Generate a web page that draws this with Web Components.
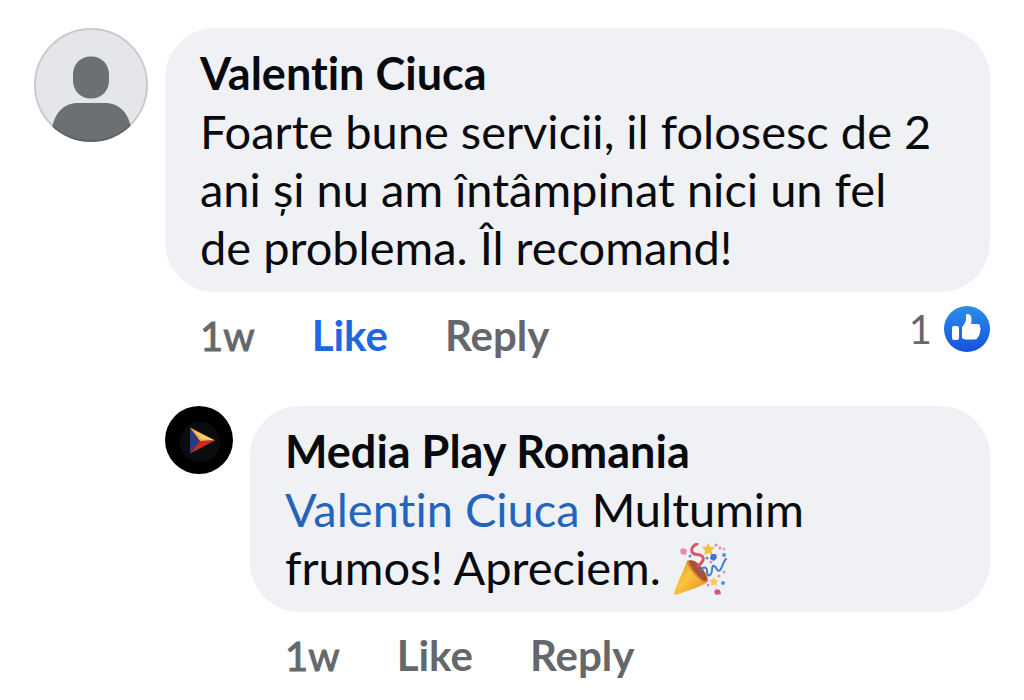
<!DOCTYPE html>
<html lang="ro">
<head>
<meta charset="utf-8">
<meta name="viewport" content="width=device-width, initial-scale=1">
<title>Comments</title>
<style>
  body { margin: 0; background: #fff; color: #080a0e; font-family: Lato, "Noto Sans", sans-serif; font-variant-ligatures: none; }
</style>
</head>
<body>
<comment-thread>
  <comment-item>
    <user-avatar slot="avatar"></user-avatar>
    <span slot="name">Valentin Ciuca</span>
    Foarte bune servicii, il folosesc de 2 ani și nu am întâmpinat nici un fel de problema. Îl recomand!
    <comment-actions slot="actions" age="1w" liked count="1"></comment-actions>
  </comment-item>
  <comment-item reply>
    <brand-avatar slot="avatar"></brand-avatar>
    <span slot="name">Media Play Romania</span>
    <user-mention>Valentin Ciuca</user-mention> Multumim frumos! Apreciem. <party-emoji></party-emoji>
    <comment-actions slot="actions" age="1w"></comment-actions>
  </comment-item>
</comment-thread>

<script>
function define(name, html, setup) {
  const template = document.createElement('template');
  template.innerHTML = html;
  customElements.define(name, class extends HTMLElement {
    constructor() {
      super();
      this.attachShadow({ mode: 'open' }).append(template.content.cloneNode(true));
    }
    connectedCallback() { if (setup) setup(this, this.shadowRoot); }
  });
}

define('comment-thread', `
  <style>
    :host { display: flex; flex-direction: column; gap: 41px; padding: 28px 34px 16px; }
  </style>
  <slot></slot>`);

define('comment-item', `
  <style>
    :host { display: block; }
    :host([reply]) { padding-left: 131px; }
    article { display: grid; grid-template-columns: auto 1fr; column-gap: 17px; align-items: start; }
    .bubble { background: #f0f1f5; border-radius: 50px; padding: 16px 50px 16px 35px; font-size: 47px; line-height: 58px; }
    h3 { margin: 0; font-size: 45px; line-height: 58px; font-weight: 700; }
    p { margin: 0; }
    .actions { grid-column: 2; padding-left: 35px; }
  </style>
  <article>
    <slot name="avatar"></slot>
    <div class="bubble">
      <h3><slot name="name"></slot></h3>
      <p><slot></slot></p>
    </div>
    <div class="actions"><slot name="actions"></slot></div>
  </article>`);

define('user-avatar', `
  <style>
    :host { display: block; width: 114px; height: 114px; }
    svg { display: block; }
  </style>
  <svg width="114" height="114" viewBox="0 0 114 114" role="img" aria-label="Profile picture">
    <defs><clipPath id="c"><circle cx="57" cy="57" r="57"/></clipPath></defs>
    <circle cx="57" cy="57" r="57" fill="#e4e6ea"/>
    <g clip-path="url(#c)" fill="#6d7072">
      <path d="M57 28.500c10.500 0 18 7.500 18 18v6C75 63 67.500 70.500 57 70.500S39 63 39 52.500v-6c0-10.500 7.500-18 18-18z"/>
      <path d="M44 75h27c14 0 24 10 26 26v13H18v-13c2-16 12-26 26-26z"/>
    </g>
    <circle cx="57" cy="57" r="56" fill="none" stroke="#000" stroke-opacity=".12" stroke-width="2"/>
  </svg>`);

define('brand-avatar', `
  <style>
    :host { display: block; width: 68px; height: 68px; }
    svg { display: block; }
  </style>
  <svg width="68" height="68" viewBox="0 0 68 68" role="img" aria-label="Media Play Romania">
    <circle cx="34" cy="34" r="34" fill="#000"/>
    <circle cx="35" cy="36" r="20" fill="#0b0c10"/>
    <path d="M25 21.500 35 35 25 47.500z" fill="#2b3a80"/>
    <path d="M25 21.500 50 34.500 35 35z" fill="#f0b04a"/>
    <path d="M30 25 50 34.500 37 33z" fill="#f8cf70"/>
    <path d="M50 34.500 25 47.500 35 35z" fill="#cf2a22"/>
  </svg>`);

define('user-mention', `
  <style>
    :host { display: inline; }
    a { color: #2365bd; text-decoration: none; }
  </style>
  <a href="#profile"><slot></slot></a>`);

define('party-emoji', `
  <style>
    :host { display: inline-block; width: 54px; height: 52px; vertical-align: -10px; }
    svg { display: block; }
  </style>
  <svg width="54" height="52" viewBox="0 0 54 52" role="img" aria-label="Party popper">
    <defs><linearGradient id="g" x1="0" y1="0" x2="1" y2="1">
      <stop offset="0" stop-color="#e79a1c"/><stop offset=".45" stop-color="#fbc43c"/><stop offset="1" stop-color="#e08a1c"/>
    </linearGradient></defs>
    <path d="M14 18C10 29 3 43 1 50c0 2 1 2 3 1.500C13 48 25 45 33 40c4-4-11-24-19-22z" fill="url(#g)"/>
    <path d="M14 18c5-3 12 2 16 8 5 7 7 12 3 14-5-1-8-5-12-9-4-5-7-9-7-13z" fill="#d98a2a"/>
    <path d="M16 18c5-2 10 3 14 9 4 6 5 10 3 11-4 0-8-5-11-9-4-5-6-8-6-11z" fill="#a9503a"/>
    <path d="M25 23c4-3 7-7 4-10-3-3-8 0-10-4-1-3 1-7 5-8" fill="none" stroke="#d9566c" stroke-width="3" stroke-linecap="round"/>
    <path d="M28 27c2-4 6-3 6 1s2 6 4 3 0-9 3-8 3 7 6 4 2-7 6-11" fill="none" stroke="#3f7fc9" stroke-width="2" stroke-linecap="round"/>
    <path d="m35 0 2 4 5 .5-3.500 3 1 4.500-4-2-4 2 .5-4.500L29 4l4.500-.5z" fill="#f4bf3d"/>
    <path d="m41 34 1.500 3 3.500.5-2.500 2 .5 3.500-3-1.500-3 1.500.5-3.500-2.500-2.500 3.500-.5z" fill="#f6c95a"/>
    <g fill="#e68aac">
      <path d="m10 5 4 2-1 5-5-1-1-4z"/>
      <circle cx="43" cy="2" r="1.500"/><circle cx="47" cy="5" r="1.500"/><circle cx="46" cy="33" r="1.500"/>
      <circle cx="35" cy="42" r="1.500"/><circle cx="38" cy="19" r="1.500"/>
    </g>
    <path d="m38 11 5 0 1 4-3 3-4-2z" fill="#4b6fd0"/>
    <path d="m43 46 4 1 1 4-5 1-2-3z" fill="#d9567c"/>
    <g fill="#5590d8">
      <circle cx="17" cy="13" r="1.500"/><circle cx="51" cy="12" r="2"/><circle cx="50" cy="40" r="2"/><circle cx="34" cy="15" r="1.500"/>
    </g>
    <circle cx="51" cy="6" r="1.500" fill="#f0a0b8"/><circle cx="51" cy="29" r="1.500" fill="#c99be0"/>
  </svg>`);

define('like-badge', `
  <style>
    :host { display: block; width: 46px; height: 46px; }
    svg { display: block; }
  </style>
  <svg width="46" height="46" viewBox="0 0 46 46" role="img" aria-label="Likes">
    <defs><linearGradient id="b" x1="0" y1="0" x2="0" y2="1">
      <stop offset="0" stop-color="#2b8ee8"/><stop offset="1" stop-color="#1553dc"/>
    </linearGradient></defs>
    <circle cx="23" cy="23" r="23" fill="url(#b)"/>
    <rect x="8" y="20" width="7" height="14" rx="2" fill="#fff"/>
    <path d="M22 9.500c0-2 4-2 5 1 1 2 .5 5 0 7.500h6.500c2 0 3 1.500 2.500 3 .8 1 .8 2.500 0 3.500.6 1.200.3 2.500-.8 3.500.4 1.500-.4 2.500-1.500 3-.3 1.800-1.400 2.500-3.200 2.500h-7c-2.500 0-4-.5-5.500-1.500V21c2-2.500 4-5 4-7.500z" fill="#fff"/>
  </svg>`);

define('comment-actions', `
  <style>
    :host { display: flex; align-items: baseline; gap: 57px; padding-top: 14px; font-size: 40px; line-height: 58px; color: #65686b; }
    button { all: unset; font-size: 42px; font-weight: 700; cursor: pointer; }
    :host([liked]) .like { color: #1b68e0; }
    time { -webkit-text-stroke: 1px currentColor; }
    .reactions { display: flex; align-items: center; align-self: flex-start; gap: 12px; margin-left: auto; line-height: 46px; }
    .reactions[hidden] { display: none; }
  </style>
  <time></time>
  <button type="button" class="like">Like</button>
  <button type="button">Reply</button>
  <div class="reactions" hidden><span></span><like-badge></like-badge></div>`,
  (host, root) => {
    root.querySelector('time').textContent = host.getAttribute('age');
    if (host.hasAttribute('count')) {
      root.querySelector('.reactions').hidden = false;
      root.querySelector('.reactions span').textContent = host.getAttribute('count');
    }
  });
</script>
</body>
</html>
